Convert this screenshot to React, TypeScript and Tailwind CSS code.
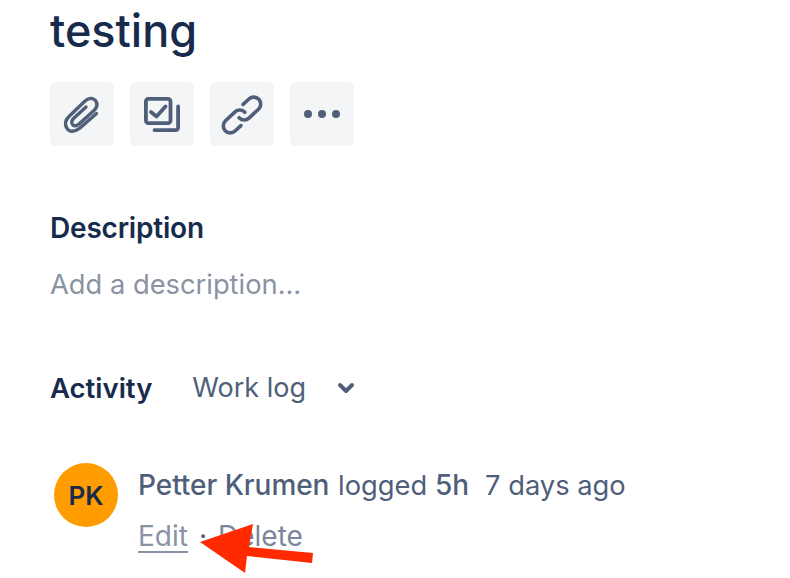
function IconButton({ children }: { children: React.ReactNode }) {
  return (
    <button className="flex h-16 w-16 items-center justify-center rounded-md bg-[#f4f5f7] text-[#505f79]">
      {children}
    </button>
  )
}

function ClipIcon() {
  return (
    <svg width="64" height="64" viewBox="0 0 64 64" fill="none" stroke="currentColor" strokeWidth="3.4" strokeLinecap="round" strokeLinejoin="round">
      <path d="M46.5 31.5L30 46C24.5 50.5 19 50 17 46.5C14.5 42.5 15.5 38 19 34.5L34.5 19.5C38.5 15.5 43 15.5 45.5 18.5C48 22 47 25.5 44 28.5L29 42C27 44 24 44.5 22.5 42.5C21 40.5 22 38 24 36L36 25" />
    </svg>
  )
}

function TaskIcon() {
  return (
    <svg width="64" height="64" viewBox="0 0 64 64" fill="none" stroke="currentColor" strokeWidth="3.8" strokeLinejoin="round" strokeLinecap="round">
      <rect x="15.9" y="16.9" width="24.6" height="24.2" rx="2.5" />
      <path d="M48.1 24.5V45.6a2.5 2.5 0 0 1-2.5 2.5H24.5" />
      <path d="M21 30l5.5 4.5 9-10" />
    </svg>
  )
}

function LinkIcon() {
  return (
    <svg width="64" height="64" viewBox="0 0 64 64" fill="none" stroke="currentColor" strokeWidth="3.6" strokeLinecap="round" strokeLinejoin="round">
      <g transform="rotate(-43 32 33)">
        <path d="M36 33a7 7 0 0 0-7-7H16a7 7 0 0 0 0 14h8" />
        <path d="M28 33a7 7 0 0 0 7 7h13a7 7 0 0 0 0-14h-8" />
      </g>
    </svg>
  )
}

export default function App() {
  return (
    <div className="relative h-[578px] w-[790px] overflow-hidden bg-white pl-[50px] font-['Inter',sans-serif]">
      <h1 className="h-[62px] text-[45px] leading-[62px] font-medium text-[#172b4d]">testing</h1>

      <div className="mt-5 flex gap-4">
        <IconButton>
          <ClipIcon />
        </IconButton>
        <IconButton>
          <TaskIcon />
        </IconButton>
        <IconButton>
          <LinkIcon />
        </IconButton>
        <IconButton>
          <span className="flex gap-[6px]">
            <span className="h-2 w-2 rounded-full bg-[#505f79]" />
            <span className="h-2 w-2 rounded-full bg-[#505f79]" />
            <span className="h-2 w-2 rounded-full bg-[#505f79]" />
          </span>
        </IconButton>
      </div>

      <h2 className="mt-[64px] text-[28px] leading-9 font-semibold tracking-[-0.2px] text-[#172b4d]">Description</h2>
      <p className="mt-[21px] text-[27.3px] leading-9 text-[#8993a4]">Add a description...</p>

      <div className="mt-[67px] flex items-center">
        <span className="text-[27.5px] leading-9 font-semibold text-[#172b4d]">Activity</span>
        <span className="ml-10 text-[27px] leading-9 text-[#505f79]">Work log</span>
        <svg className="ml-[31px]" width="18" height="12" viewBox="0 0 18 12" fill="none" stroke="#505f79" strokeWidth="4" strokeLinecap="round" strokeLinejoin="round">
          <path d="M3 3l6 6 6-6" />
        </svg>
      </div>

      <div className="mt-[57px] flex pl-1">
        <div className="flex h-16 w-16 items-center justify-center rounded-full bg-[#ff9d00] text-[26px] font-semibold text-[#172b4d]">
          PK
        </div>
        <div className="ml-5 pt-[4px]">
          <p className="text-[27.3px] leading-9 text-[#505f79]">
            <span className="text-[28px] font-medium tracking-[-0.05px]">Petter Krumen</span>{" "}
            <span className="ml-px">logged</span> <span className="text-[28px] font-medium">5h</span>
            <span className="ml-4">7 days ago</span>
          </p>
          <p className="mt-[17px] text-[28px] leading-[30px] text-[#7a869a]">
            <span className="inline-block h-8 border-b-2 border-[#8993a4] text-[#8993a4]">Edit</span>
            <span className="mx-[11px] text-[#505f79]">·</span>
            <span>Delete</span>
          </p>
        </div>
      </div>

      {/* annotation arrow */}
      <svg className="absolute top-0 left-0" width="790" height="578" viewBox="0 0 790 578">
        <polygon points="200,542 253,524 249,547 313,553 312,563 247,556 245,573" fill="#ff2a00" />
      </svg>
    </div>
  )
}
